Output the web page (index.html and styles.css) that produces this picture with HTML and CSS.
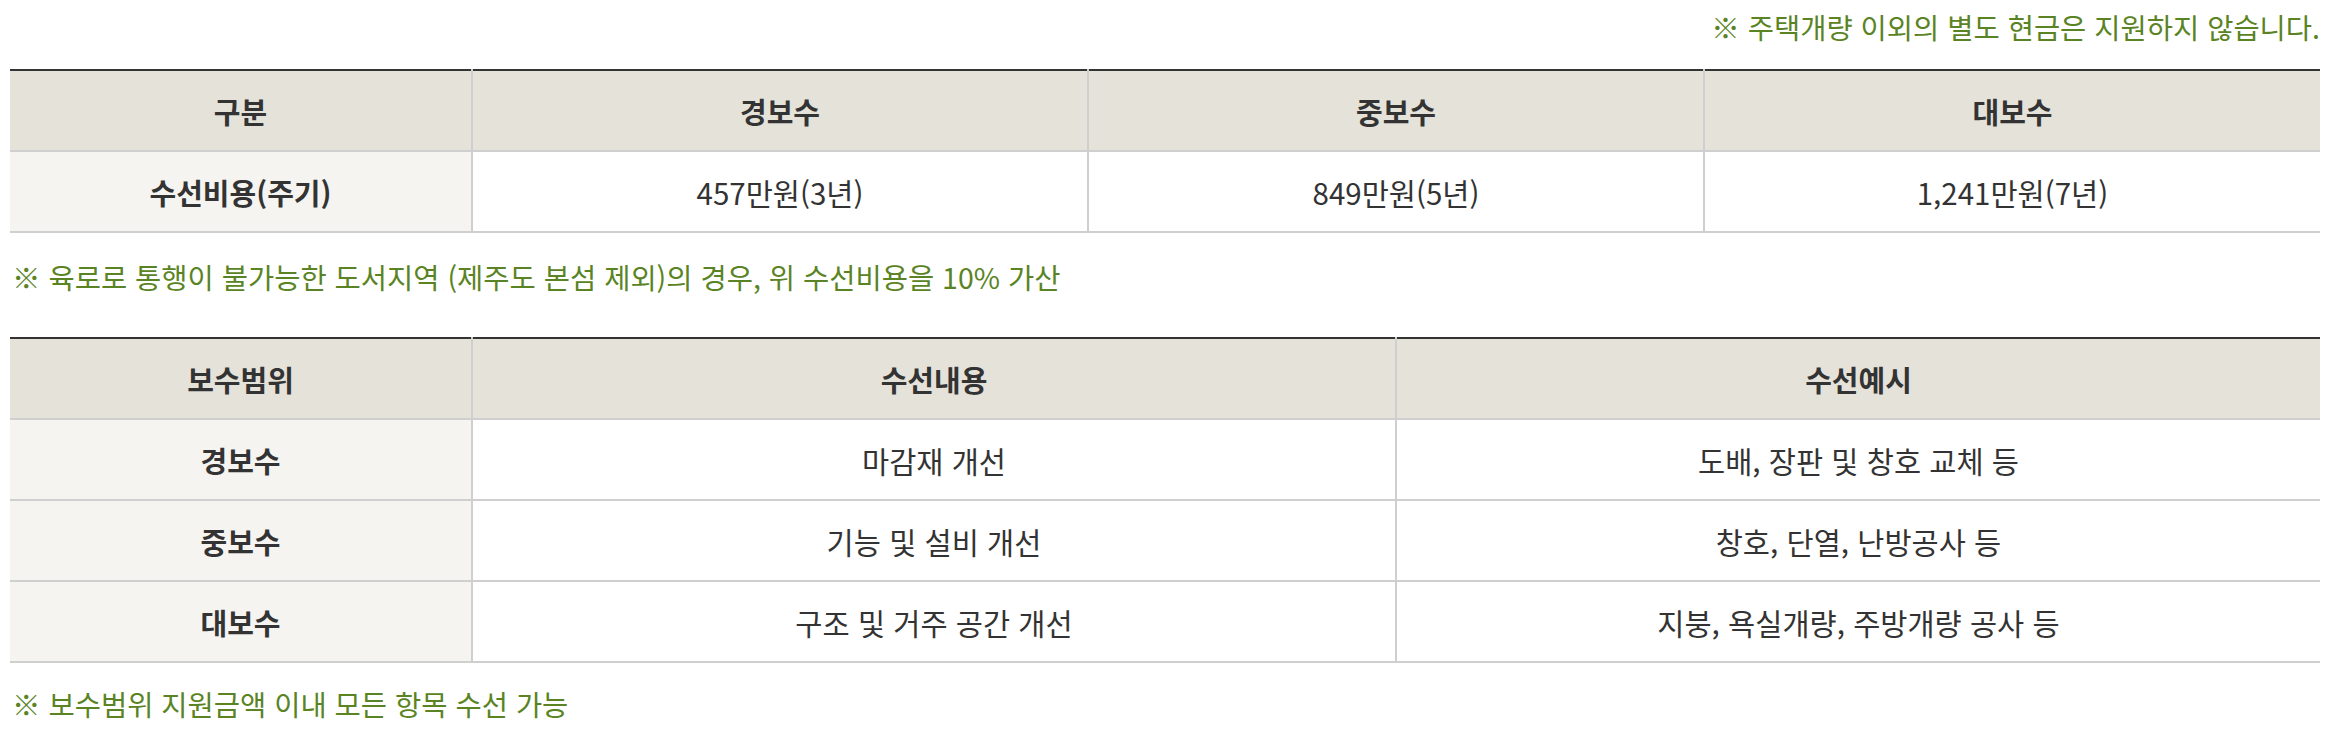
FILE: index.html
```html
<!DOCTYPE html>
<html lang="ko">
<head>
<meta charset="utf-8">
<title>수선비용</title>
<link rel="stylesheet" href="styles.css">
</head>
<body>
<div class="page">
  <p class="note note-right">※ 주택개량 이외의 별도 현금은 지원하지 않습니다.</p>
  <table class="tbl tbl-cost">
    <colgroup>
      <col class="c-first"><col class="c-third"><col class="c-third"><col class="c-third">
    </colgroup>
    <thead>
      <tr><th>구분</th><th>경보수</th><th>중보수</th><th>대보수</th></tr>
    </thead>
    <tbody>
      <tr><th>수선비용(주기)</th><td>457만원(3년)</td><td>849만원(5년)</td><td>1,241만원(7년)</td></tr>
    </tbody>
  </table>
  <p class="note note-mid">※ 육로로 통행이 불가능한 도서지역 (제주도 본섬 제외)의 경우, 위 수선비용을 10% 가산</p>
  <table class="tbl tbl-scope">
    <colgroup>
      <col class="c-first"><col class="c-half"><col class="c-half">
    </colgroup>
    <thead>
      <tr><th>보수범위</th><th>수선내용</th><th>수선예시</th></tr>
    </thead>
    <tbody>
      <tr><th>경보수</th><td>마감재 개선</td><td>도배, 장판 및 창호 교체 등</td></tr>
      <tr><th>중보수</th><td>기능 및 설비 개선</td><td>창호, 단열, 난방공사 등</td></tr>
      <tr><th>대보수</th><td>구조 및 거주 공간 개선</td><td>지붕, 욕실개량, 주방개량 공사 등</td></tr>
    </tbody>
  </table>
  <p class="note note-last">※ 보수범위 지원금액 이내 모든 항목 수선 가능</p>
</div>
</body>
</html>
```

FILE: styles.css
```css
html, body {
  margin: 0;
  padding: 0;
  background: #ffffff;
}
body {
  font-family: "Noto Sans CJK KR", "Noto Sans", sans-serif;
  color: #333333;
}
.page {
  width: 2310px;
  padding: 0 0 0 10px;
}
.note {
  margin: 0;
  font-size: 28.5px;
  line-height: 36px;
  color: #5a8424;
}
.note-right {
  text-align: right;
  margin-top: 9px;
  margin-bottom: 24px;
}
.note-mid {
  margin-top: 26px;
  margin-bottom: 42px;
  padding-left: 2px;
}
.note-last {
  margin-top: 23px;
  padding-left: 2px;
}
.tbl {
  width: 100%;
  border-collapse: collapse;
  table-layout: fixed;
  border-top: 2px solid #333333;
  font-size: 29.5px;
}
.c-first { width: 20%; }
.c-third { width: 26.6667%; }
.c-half { width: 40%; }
.tbl th, .tbl td {
  height: 79px;
  padding: 0;
  text-align: center;
  vertical-align: middle;
  border: 2px solid #cfcfcf;
  border-top: 0;
}
.tbl tr > :first-child { border-left: 0; }
.tbl tr > :last-child { border-right: 0; }
.tbl thead th {
  background: #e5e2da;
  font-weight: 700;
  font-size: 29px;
}
.tbl tbody th {
  background: #f5f4f0;
  font-weight: 700;
  font-size: 29px;
}
.tbl tbody td {
  font-weight: 400;
  background: #ffffff;
}
```
